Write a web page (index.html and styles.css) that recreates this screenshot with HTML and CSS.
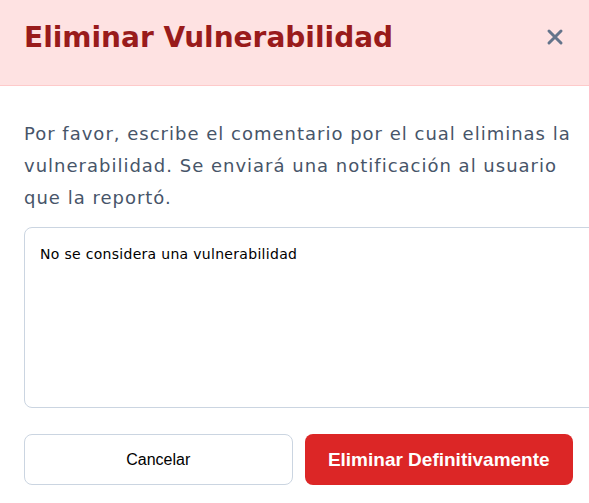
FILE: index.html
```html
<!DOCTYPE html>
<html lang="es">
<head>
<meta charset="utf-8">
<title>Eliminar Vulnerabilidad</title>
<link rel="stylesheet" href="styles.css">
</head>
<body>
<div class="modal">
  <header class="modal-header">
    <h2 class="modal-title">Eliminar Vulnerabilidad</h2>
    <button class="close-btn" type="button" aria-label="Cerrar">
      <svg viewBox="0 0 24 24" width="24" height="24" fill="none" stroke="currentColor" stroke-width="3" stroke-linecap="round">
        <path d="M6 6 18 18M18 6 6 18"/>
      </svg>
    </button>
  </header>
  <div class="modal-body">
    <p class="modal-text">Por favor, escribe el comentario por el cual eliminas la vulnerabilidad. Se enviará una notificación al usuario que la reportó.</p>
    <textarea class="comment" rows="6">No se considera una vulnerabilidad</textarea>
    <div class="actions">
      <button class="btn btn-cancel" type="button">Cancelar</button>
      <button class="btn btn-danger" type="button">Eliminar Definitivamente</button>
    </div>
  </div>
</div>
</body>
</html>
```

FILE: styles.css
```css
* { box-sizing: border-box; }

html, body {
  margin: 0;
  background: #ffffff;
  overflow: hidden;
}

.modal {
  width: 597px;
  font-family: "DejaVu Sans", "Noto Sans", sans-serif;
}

.modal-header {
  height: 86px;
  background: #fee2e2;
  border-bottom: 1px solid #fecaca;
  display: flex;
  align-items: center;
  justify-content: space-between;
  padding: 0 24px 11px;
}

.modal-title {
  margin: 0;
  font-size: 28px;
  font-weight: 700;
  color: #991b1b;
}

.close-btn {
  border: 0;
  background: none;
  padding: 0;
  color: #64748b;
  display: flex;
  margin-right: 6px;
}

.modal-body {
  padding: 32px 24px 24px;
}

.modal-text {
  margin: 0 0 13px;
  font-size: 18px;
  letter-spacing: 1px;
  line-height: 32px;
  color: #475569;
}

.comment {
  display: block;
  width: 600px;
  height: 181px;
  border: 1px solid #cbd5e1;
  border-radius: 8px;
  padding: 18px 15px;
  font-family: "DejaVu Sans", "Noto Sans", sans-serif;
  font-size: 14px;
  letter-spacing: 0.3px;
  color: #000;
  resize: none;
  outline: none;
}

.actions {
  display: grid;
  grid-template-columns: 1fr 1fr;
  gap: 12px;
  margin-top: 26px;
}

.btn {
  height: 51px;
  border-radius: 8px;
  font-family: "Liberation Sans", Arial, sans-serif;
  cursor: pointer;
}

.btn-cancel {
  background: #fff;
  border: 1px solid #cbd5e1;
  color: #000;
  font-size: 16px;
}

.btn-danger {
  background: #dc2626;
  border: 0;
  color: #fff;
  font-size: 19px;
  font-weight: 700;
}
```
